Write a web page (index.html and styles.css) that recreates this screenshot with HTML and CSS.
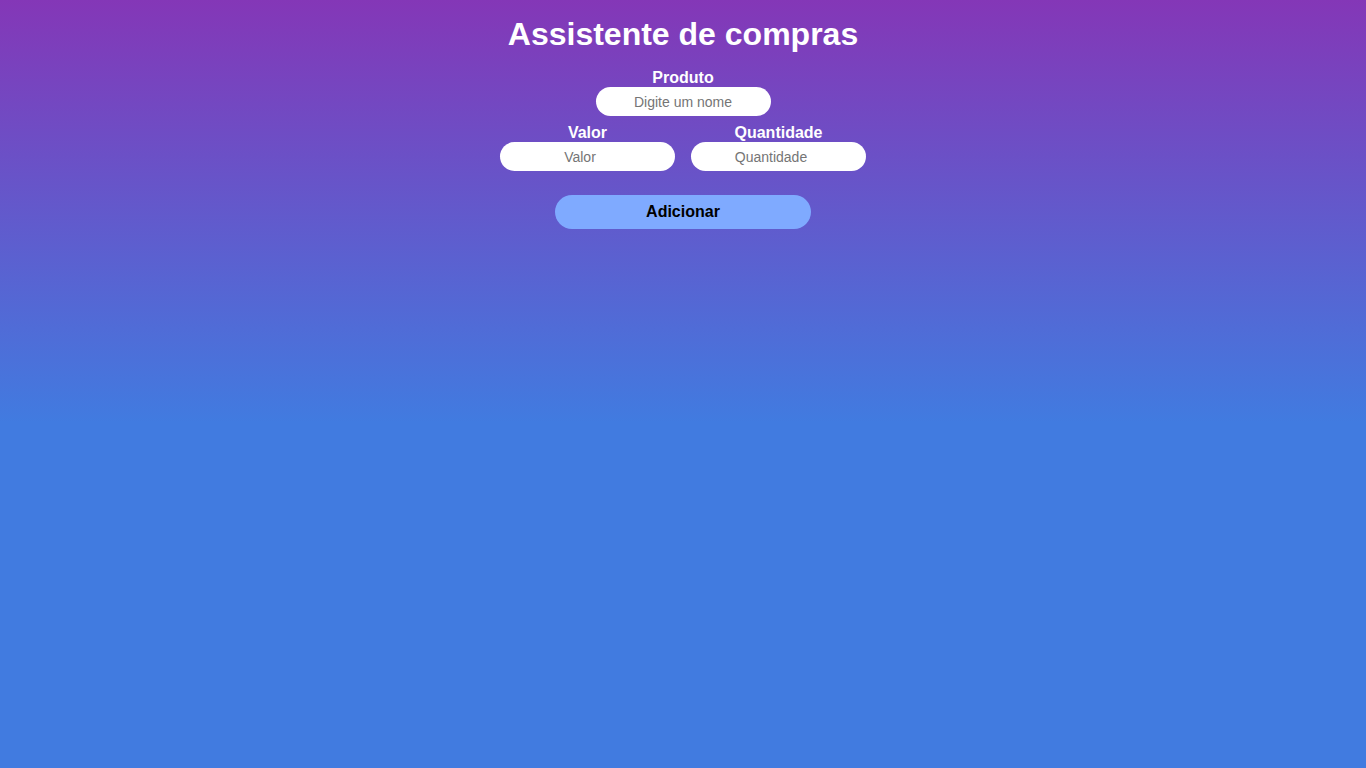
FILE: index.html
```html
<!DOCTYPE html>
<html lang="pt-BR">
<head>
<meta charset="utf-8">
<title>Assistente de compras</title>
<link rel="stylesheet" href="styles.css">
</head>
<body>
<main class="app">
  <h1 class="title">Assistente de compras</h1>
  <form class="form">
    <div class="field">
      <label class="label" for="produto">Produto</label>
      <input class="input" id="produto" type="text" placeholder="Digite um nome">
    </div>
    <div class="row">
      <div class="field">
        <label class="label" for="valor">Valor</label>
        <input class="input" id="valor" type="number" placeholder="Valor">
      </div>
      <div class="field">
        <label class="label" for="quantidade">Quantidade</label>
        <input class="input" id="quantidade" type="number" placeholder="Quantidade">
      </div>
    </div>
    <button class="button" type="button">Adicionar</button>
  </form>
</main>
</body>
</html>
```

FILE: styles.css
```css
html, body {
  margin: 0;
  height: 100%;
}
body {
  background: linear-gradient(180deg, #8437b7 0%, #417be0 55%, #417be0 100%);
  font-family: "Liberation Sans", Arial, sans-serif;
  color: #fff;
}
.app {
  display: flex;
  flex-direction: column;
  align-items: center;
  padding-top: 16px;
}
.title {
  margin: 0;
  font-size: 32px;
  font-weight: bold;
  line-height: 37px;
}
.form {
  display: flex;
  flex-direction: column;
  align-items: center;
  margin-top: 15px;
}
.field {
  display: flex;
  flex-direction: column;
  align-items: center;
}
.label {
  font-size: 16px;
  font-weight: bold;
  line-height: 19px;
}
.input {
  box-sizing: border-box;
  width: 175px;
  height: 29px;
  border: none;
  border-radius: 15px;
  background: #fff;
  text-align: center;
  font-family: "Liberation Sans", Arial, sans-serif;
  font-size: 14px;
  color: #333;
  outline: none;
  padding: 0 10px;
}
.input::placeholder {
  color: #757575;
}
.row {
  display: flex;
  gap: 16px;
  margin-top: 7px;
}
.button {
  margin-top: 24px;
  width: 256px;
  height: 34px;
  border: none;
  border-radius: 17px;
  background: #7faaff;
  color: #000;
  font-family: "Liberation Sans", Arial, sans-serif;
  font-size: 16px;
  font-weight: bold;
  cursor: pointer;
}
```
